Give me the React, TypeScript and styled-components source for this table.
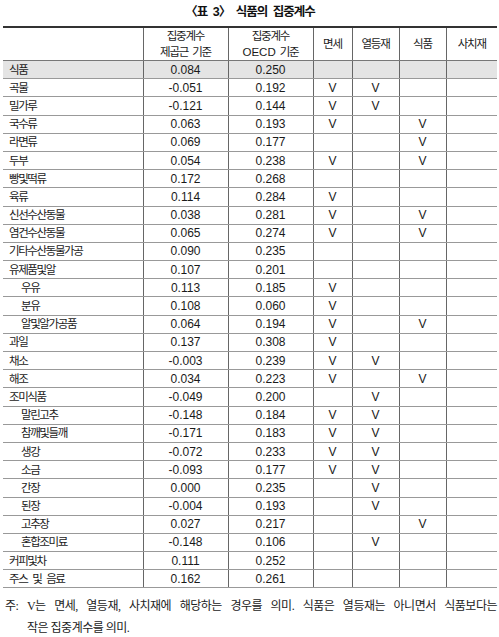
import styled, { createGlobalStyle } from "styled-components";

const GlobalStyle = createGlobalStyle`
  body {
    margin: 0;
    background: #fff;
    color: #1a1a1a;
    font-family: "Liberation Sans", "Noto Sans CJK KR", sans-serif;
  }
`;

const App = () => {
  return (
    <Page>
      <GlobalStyle />
      <Title>〈표 3〉 식품의 집중계수</Title>
      <Table>
        <colgroup>
          <col style={{ width: 140 }} />
          <col style={{ width: 85 }} />
          <col style={{ width: 85 }} />
          <col style={{ width: 39 }} />
          <col style={{ width: 47 }} />
          <col style={{ width: 47 }} />
          <col />
        </colgroup>
        <thead>
          <tr>
            <HeadCell />
            <HeadCell>
              집중계수
              <br />
              제곱근 기준
            </HeadCell>
            <HeadCell>
              집중계수
              <br />
              <Latin>OECD</Latin> 기준
            </HeadCell>
            <HeadCell>면세</HeadCell>
            <HeadCell>열등재</HeadCell>
            <HeadCell>식품</HeadCell>
            <HeadCell>사치재</HeadCell>
          </tr>
        </thead>
        <tbody>
          {rows.map((row, i) => (
            <Row key={row.name} $shade={i === 0}>
              <NameCell $indent={!!row.sub}>{row.name}</NameCell>
              <Cell>{row.sqrt}</Cell>
              <Cell>{row.oecd}</Cell>
              {row.marks.map((m, j) => (
                <Cell key={j}>{m ? "V" : ""}</Cell>
              ))}
            </Row>
          ))}
        </tbody>
      </Table>
      <Note>
        <NoteFirst>
          주: V는 면세, 열등재, 사치재에 해당하는 경우를 의미. 식품은 열등재는 아니면서 식품보다는
        </NoteFirst>
        <NoteRest>작은 집중계수를 의미.</NoteRest>
      </Note>
    </Page>
  );
};

interface RowData {
  name: string;
  sqrt: string;
  oecd: string;
  marks: boolean[];
  sub?: boolean;
}

const r = (
  name: string,
  sqrt: string,
  oecd: string,
  marks: string,
  sub?: boolean
): RowData => ({
  name,
  sqrt,
  oecd,
  marks: marks.split("").map((c) => c === "v"),
  sub,
});

const rows: RowData[] = [
  r("식품", "0.084", "0.250", "...."),
  r("곡물", "-0.051", "0.192", "vv.."),
  r("밀가루", "-0.121", "0.144", "vv.."),
  r("국수류", "0.063", "0.193", "v.v."),
  r("라면류", "0.069", "0.177", "..v."),
  r("두부", "0.054", "0.238", "v.v."),
  r("빵및떡류", "0.172", "0.268", "...."),
  r("육류", "0.114", "0.284", "v..."),
  r("신선수산동물", "0.038", "0.281", "v.v."),
  r("염건수산동물", "0.065", "0.274", "v.v."),
  r("기타수산동물가공", "0.090", "0.235", "...."),
  r("유제품및알", "0.107", "0.201", "...."),
  r("우유", "0.113", "0.185", "v...", true),
  r("분유", "0.108", "0.060", "v...", true),
  r("알및알가공품", "0.064", "0.194", "v.v.", true),
  r("과일", "0.137", "0.308", "v..."),
  r("채소", "-0.003", "0.239", "vv.."),
  r("해조", "0.034", "0.223", "v.v."),
  r("조미식품", "-0.049", "0.200", ".v.."),
  r("말린고추", "-0.148", "0.184", "vv..", true),
  r("참깨및들깨", "-0.171", "0.183", "vv..", true),
  r("생강", "-0.072", "0.233", "vv..", true),
  r("소금", "-0.093", "0.177", "vv..", true),
  r("간장", "0.000", "0.235", ".v..", true),
  r("된장", "-0.004", "0.193", ".v..", true),
  r("고추장", "0.027", "0.217", "..v.", true),
  r("혼합조미료", "-0.148", "0.106", ".v..", true),
  r("커피및차", "0.111", "0.252", "...."),
  r("주스 및 음료", "0.162", "0.261", "...."),
];

const Page = styled.div`
  width: 494px;
  padding: 4px 2px 0 3px;
`;

const Title = styled.div`
  text-align: center;
  font-size: 12.5px;
  font-weight: bold;
  letter-spacing: -1px;
  word-spacing: 3px;
  line-height: 16px;
  margin-bottom: 6px;
  color: #111;
`;

const Table = styled.table`
  width: 100%;
  table-layout: fixed;
  border-collapse: collapse;
  border-top: 2px solid #333;
  border-bottom: 1px solid #444;
`;

const HeadCell = styled.th`
  height: 32px;
  padding: 0;
  font-weight: normal;
  font-size: 11.5px;
  letter-spacing: -1.2px;
  word-spacing: 2px;
  line-height: 16px;
  text-align: center;
  color: #1a1a1a;
  border-left: 1px solid #666;
  border-bottom: 1px solid #777;

  &:first-child {
    border-left: none;
  }
`;

const Latin = styled.span`
  letter-spacing: 0;
`;

const Row = styled.tr<{ $shade: boolean }>`
  height: 18.2px;
  background: ${(p) => (p.$shade ? "#e4e4e4" : "transparent")};
`;

const Cell = styled.td`
  padding: 0;
  font-size: 12px;
  line-height: 14px;
  text-align: center;
  color: #1a1a1a;
  border-left: 1px solid #666;
  border-bottom: 1px solid #999;
`;

const NameCell = styled(Cell)<{ $indent: boolean }>`
  border-left: none;
  text-align: left;
  font-size: 11.5px;
  letter-spacing: -1.4px;
  word-spacing: 3px;
  padding-left: ${(p) => (p.$indent ? "18px" : "6px")};
`;

const Note = styled.div`
  margin-top: 7px;
  font-family: "Liberation Serif", "Noto Sans CJK KR", serif;
  font-size: 12px;
  line-height: 22px;
  color: #222;
`;

const NoteFirst = styled.div`
  padding-left: 2px;
  text-align: justify;
  text-align-last: justify;
  letter-spacing: -0.5px;
`;

const NoteRest = styled.div`
  padding-left: 24px;
  letter-spacing: -0.5px;
`;

export default App;
